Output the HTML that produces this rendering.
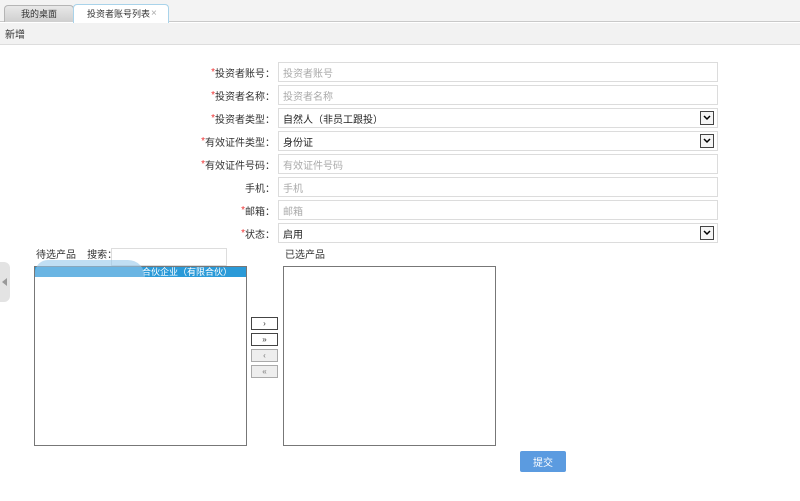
<!DOCTYPE html>
<html><head><meta charset="utf-8"><style>
*{margin:0;padding:0;box-sizing:border-box}
body{width:800px;height:501px;background:#fff;font-family:"Liberation Sans","Noto Sans CJK SC",sans-serif;font-size:11px;color:#333;position:relative;overflow:hidden}
.abs{position:absolute}
.topbar{left:0;top:0;width:800px;height:22px;background:#f3f3f3;border-bottom:1px solid #c9c9c9}
.tab1{left:4px;top:5px;width:70px;height:17px;background:linear-gradient(#e8e8e8,#cfcfcf);border:1px solid #b5b5b5;border-bottom:none;border-radius:4px 4px 0 0;text-align:center;line-height:16px;font-size:9px;color:#333}
.tab2{left:73px;top:4px;width:96px;height:19px;background:#fff;border:1px solid #a9d3ea;border-bottom:none;border-radius:4px 4px 0 0;line-height:18px;font-size:9px;color:#333;padding-left:13px;white-space:nowrap}
.tool{left:0;top:23px;width:800px;height:22px;background:#f2f2f2;border-bottom:1px solid #ddd;display:flex;align-items:center;padding-left:5px;font-size:10px}
.lbl{width:164px;left:111px;height:20px;font-size:10px;display:flex;align-items:center;justify-content:flex-end}
.lbl b{color:#e33;font-weight:normal}
.inp{left:278px;width:440px;height:20px;border:1px solid #dcdcdc;display:flex;align-items:center;padding-left:4px;font-size:10px;color:#aaa}
.sel{color:#222}
.arr{position:absolute;right:3px;top:2px;width:14px;height:14px;border:1px solid #444;background:#f5f5f5;display:flex;align-items:center;justify-content:center}
.box{border:1px solid #777;background:#fff}
.btn{left:251px;width:27px;height:13px;border:1px solid #444;background:#fff;font-size:8px;display:flex;align-items:center;justify-content:center}
.btn.d{border-color:#aaa;background:#eee;color:#777}
</style></head><body>
<div class="abs topbar"></div>
<div class="abs tab1">我的桌面</div>
<div class="abs tab2">投资者账号列表<span style="position:absolute;left:77px;top:0;color:#aaa;font-size:10px">×</span></div>
<div class="abs tool">新增</div>

<div class="abs lbl" style="top:62px"><b>*</b>投资者账号：</div><div class="abs inp" style="top:62px">投资者账号</div>
<div class="abs lbl" style="top:85px"><b>*</b>投资者名称：</div><div class="abs inp" style="top:85px">投资者名称</div>
<div class="abs lbl" style="top:108px"><b>*</b>投资者类型：</div><div class="abs inp sel" style="top:108px">自然人（非员工跟投）<span class="arr"><svg width="8" height="6"><path d="M1 1L4 4L7 1" stroke="#000" stroke-width="1.5" fill="none"/></svg></span></div>
<div class="abs lbl" style="top:131px"><b>*</b>有效证件类型：</div><div class="abs inp sel" style="top:131px">身份证<span class="arr"><svg width="8" height="6"><path d="M1 1L4 4L7 1" stroke="#000" stroke-width="1.5" fill="none"/></svg></span></div>
<div class="abs lbl" style="top:154px"><b>*</b>有效证件号码：</div><div class="abs inp" style="top:154px">有效证件号码</div>
<div class="abs lbl" style="top:177px">手机：</div><div class="abs inp" style="top:177px">手机</div>
<div class="abs lbl" style="top:200px"><b>*</b>邮箱：</div><div class="abs inp" style="top:200px">邮箱</div>
<div class="abs lbl" style="top:223px"><b>*</b>状态：</div><div class="abs inp sel" style="top:223px">启用<span class="arr"><svg width="8" height="6"><path d="M1 1L4 4L7 1" stroke="#000" stroke-width="1.5" fill="none"/></svg></span></div>

<div class="abs" style="left:0;top:262px;width:10px;height:40px;background:#e3e3e3;border-radius:0 6px 6px 0"></div>
<div class="abs" style="left:2px;top:278px;width:0;height:0;border-top:4px solid transparent;border-bottom:4px solid transparent;border-right:5px solid #999"></div>

<div class="abs" style="left:36px;top:249px;font-size:10px;line-height:14px">待选产品&nbsp;&nbsp;&nbsp;&nbsp;搜索：</div>
<div class="abs" style="left:111px;top:248px;width:116px;height:18px;border:1px solid #ddd;background:#fff"></div>
<div class="abs box" style="left:34px;top:266px;width:213px;height:180px"></div>
<div class="abs" style="left:35px;top:267px;width:211px;height:10px;background:#2a9ad8;color:#fff;font-size:9px;line-height:10px;padding-left:107px">合伙企业（有限合伙）</div>
<div class="abs" style="left:35px;top:260px;width:110px;height:17px;background:rgba(150,200,235,0.6);border-radius:30px 40px 0 0"></div>

<div class="abs" style="left:285px;top:249px;font-size:10px;line-height:14px">已选产品</div>
<div class="abs box" style="left:283px;top:266px;width:213px;height:180px"></div>

<div class="abs btn" style="top:317px">›</div>
<div class="abs btn" style="top:333px">»</div>
<div class="abs btn d" style="top:349px">‹</div>
<div class="abs btn d" style="top:365px">«</div>

<div class="abs" style="left:520px;top:451px;width:46px;height:21px;background:#5b9be0;border-radius:2px;color:#fff;display:flex;align-items:center;justify-content:center;font-size:10px">提交</div>
</body></html>
